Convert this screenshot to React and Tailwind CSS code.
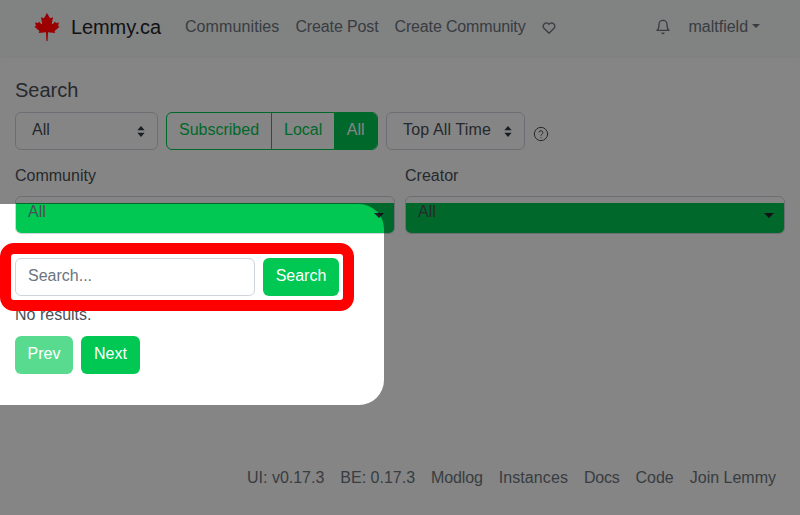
import React from "react";

function Leaf() {
  return (
    <svg viewBox="0 0 26 28" className="relative z-10 w-[26px] h-[28px]" fill="#9a0000">
      <path d="M13 0 L15.6 4.6 C16 5.2 16.6 5.2 17.2 4.9 L19 4 L17.9 10.2 C17.8 11 18.5 11.4 19 10.8 L21.2 8.4 L21.8 10 L25 9.4 L24 13 L25.6 13.8 L20.6 18 L21.2 20 L14 19.2 L13.6 28 L12.4 28 L12 19.2 L4.8 20 L5.4 18 L0.4 13.8 L2 13 L1 9.4 L4.2 10 L4.8 8.4 L7 10.8 C7.5 11.4 8.2 11 8.1 10.2 L7 4 L8.8 4.9 C9.4 5.2 10 5.2 10.4 4.6 Z" />
    </svg>
  );
}

function UpDownSelect({ label, className, textClass = "" }) {
  return (
    <div className={"h-[38px] border border-[#ced4da] rounded-[6px] flex items-center justify-between pl-4 pr-[5px] text-[#495057] " + className}>
      <span className={"pb-[2px] " + textClass}>{label}</span>
      <svg viewBox="0 0 8 12" className="w-2 h-[11px] mr-[7px]" fill="#343a40">
        <path d="M4 0 8 4.6H0ZM4 12 0 7.4H8Z" />
      </svg>
    </div>
  );
}

function GreenSelect() {
  return (
    <div className="flex-1 h-[38px] border border-[#ced4da] rounded-[6px] overflow-hidden relative text-[#495057]">
      <div className="h-[6px]" />
      <div className="h-[30px] bg-[#00c853] pl-3 pr-[10px] flex justify-between leading-[16px] relative">
        <span className="mt-[1px]">All</span>
        <span className="mt-[10px] w-0 h-0 border-x-[5px] border-x-transparent border-t-[5px] border-t-[#212529]" />
      </div>
    </div>
  );
}

export default function App() {
  return (
    <div className="relative w-[800px] h-[515px] overflow-hidden bg-white flex flex-col text-[16px] leading-6 text-[#212529] font-['Liberation_Sans',Arial,sans-serif]">
      <header className="h-14 shrink-0 flex items-center pl-[34px] pb-[2px] shadow-[0_1px_2px_rgba(0,0,0,0.06)] bg-[#f8f9fa] text-[#6c757d]">
        <Leaf />
        <span className="ml-[11px] text-[20px] text-[#212529] tracking-[-0.1px]">Lemmy.ca</span>
        <nav className="ml-6 flex gap-4">
          <span className="tracking-[0.1px]">Communities</span>
          <span className="tracking-[-0.13px]">Create Post</span>
          <span className="tracking-[-0.15px]">Create Community</span>
        </nav>
        <svg viewBox="0 0 24 24" className="ml-[17px] w-[14px] h-[14px] mt-[2px]" fill="none" stroke="currentColor" strokeWidth="2.2" strokeLinejoin="round">
          <path d="M12 21 3.4 12.4a5.4 5.4 0 0 1 7.6-7.6l1 1 1-1a5.4 5.4 0 0 1 7.6 7.6Z" />
        </svg>
        <svg viewBox="0 0 24 24" className="ml-[99px] w-4 h-4" fill="none" stroke="currentColor" strokeWidth="2" strokeLinecap="round" strokeLinejoin="round">
          <path d="M18 8a6 6 0 0 0-12 0c0 7-3 9-3 9h18s-3-2-3-9M10.5 21a1.8 1.8 0 0 0 3 0" />
        </svg>
        <span className="ml-[17px]">maltfield</span>
        <span className="ml-[4px] mb-[2px] w-0 h-0 border-x-[4px] border-x-transparent border-t-[4px] border-t-current" />
      </header>

      <main className="flex-1 px-[15px] pt-[22px]">
        <h5 className="text-[20px] leading-6 text-[#495057]">Search</h5>
        <div className="mt-[10px] flex items-center gap-2">
          <UpDownSelect label="All" className="w-[143px]" />
          <div className="flex w-[212px] h-[38px] border border-[#00c853] rounded-[6px] overflow-hidden text-[#00c853]">
            <span className="px-3 pb-[2px] flex items-center border-r border-[#00c853]">Subscribed</span>
            <span className="px-3 pb-[2px] flex items-center">Local</span>
            <span className="flex-1 justify-center pb-[2px] flex items-center bg-[#00c853] text-white">All</span>
          </div>
          <UpDownSelect label="Top All Time" className="w-[139px]" textClass="tracking-[0.15px]" />
          <svg viewBox="0 0 24 24" className="mt-[6px] w-[16px] h-[16px] text-[#495057]" fill="none" stroke="currentColor" strokeWidth="1.5" strokeLinecap="round">
            <circle cx="12" cy="12" r="10" />
            <path d="M9 9a3 3 0 0 1 5.8 1c0 2-2.8 2.4-2.8 4" />
            <path d="M12 17.5v.2" />
          </svg>
        </div>
        <div className="mt-[14px] flex gap-[10px]">
          <div className="flex-1 flex flex-col">
            <label className="text-[#495057]">Community</label>
            <div className="mt-[8px] flex"><GreenSelect /></div>
          </div>
          <div className="flex-1 flex flex-col">
            <label className="text-[#495057]">Creator</label>
            <div className="mt-[8px] flex"><GreenSelect /></div>
          </div>
        </div>

        <div className="relative mt-[24px] flex gap-2 w-[324px]">
          <div className="w-[240px] h-[38px] border border-[#ced4da] rounded-[6px] bg-white px-3 pb-[2px] flex items-center text-[#6c757d]">Search...</div>
          <div className="w-[76px] h-[38px] rounded-[6px] bg-[#00c853] text-white pb-[2px] flex items-center justify-center">Search</div>
          <div className="absolute left-[-15px] top-[-15px] w-[354px] h-[68px] border-[11px] border-[#ff0000] rounded-[14px]" />
        </div>

        <p className="mt-[7px] text-[#495057]">No results.</p>
        <div className="mt-[9px] flex gap-2">
          <div className="w-[58px] h-[38px] rounded-[6px] bg-[#00c853]/65 text-white pb-[2px] flex items-center justify-center">Prev</div>
          <div className="w-[59px] h-[38px] rounded-[6px] bg-[#00c853] text-white pb-[2px] flex items-center justify-center">Next</div>
        </div>
      </main>

      <footer className="h-[63px] shrink-0 flex justify-end gap-4 pr-[24px] pt-[14px] text-[#6c757d]">
        <span>UI: v0.17.3</span>
        <span>BE: 0.17.3</span>
        <span className="tracking-[-0.15px]">Modlog</span>
        <span className="tracking-[0.1px]">Instances</span>
        <span className="tracking-[-0.25px]">Docs</span>
        <span>Code</span>
        <span>Join Lemmy</span>
      </footer>

      <div className="absolute left-[-30px] top-[204px] w-[414px] h-[201px] rounded-[25px] shadow-[0_0_0_2000px_rgba(0,0,0,0.48)]" />
    </div>
  );
}
